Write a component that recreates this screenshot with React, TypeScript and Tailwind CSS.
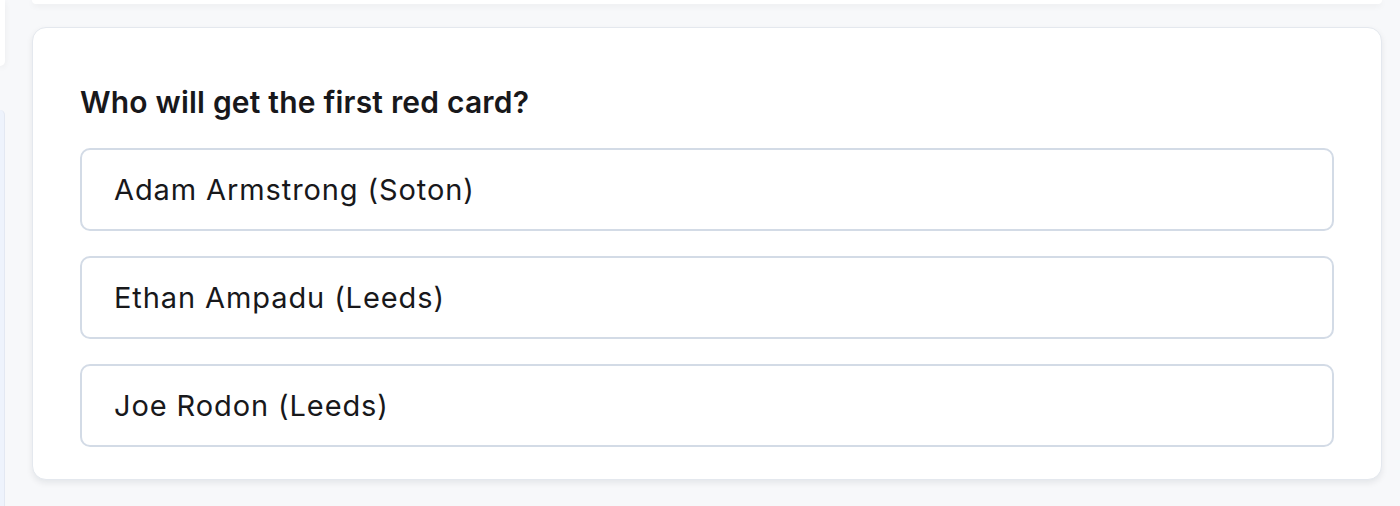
import React from 'react';

const options = ['Adam Armstrong (Soton)', 'Ethan Ampadu (Leeds)', 'Joe Rodon (Leeds)'];

const App: React.FC = () => {
  return (
    <div
      className="min-h-screen h-[506px] overflow-hidden bg-[#f7f8fa] flex"
      style={{ fontFamily: 'Inter, "Noto Sans", sans-serif' }}
    >
      {/* sidebar edges peeking in */}
      <div className="w-[5px] flex flex-col shrink-0">
        <div className="h-[66px] bg-white rounded-br-[10px] shadow-[0_2px_6px_rgba(15,23,42,0.06)]" />
        <div className="h-[44px]" />
        <div className="flex-1 bg-[#eef3fc] rounded-tr-[10px] border-r border-[#e3e8f2]" />
      </div>

      <div className="flex-1 flex flex-col pl-[27px] pr-[18px]">
        <div className="h-[4px] bg-white rounded-b-[12px] shadow-[0_2px_6px_rgba(15,23,42,0.06)]" />

        <div className="mt-[23px] bg-white border border-[#e4e8ee] rounded-[14px] shadow-[0_3px_6px_rgba(15,23,42,0.08)] px-[47px] pt-[56px] pb-[32px]">
          <h2 className="text-[30px] leading-[36px] font-semibold text-[#18181b] tracking-[0.2px]">
            Who will get the first red card?
          </h2>
          <div className="mt-[28px] flex flex-col gap-[25px]">
            {options.map((o) => (
              <div
                key={o}
                className="h-[83px] border-2 border-[#d3dbe6] rounded-[10px] flex items-center px-[32px] text-[29px] tracking-[0.9px] text-[#18181b]"
              >
                {o}
              </div>
            ))}
          </div>
        </div>
      </div>
    </div>
  );
};

export default App;
